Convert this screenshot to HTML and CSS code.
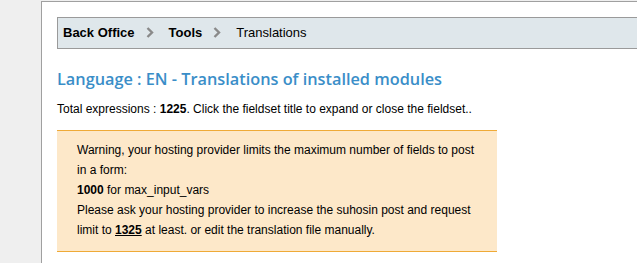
FILE: index.html
```html
<!DOCTYPE html>
<html>
<head>
  <title>Translations</title>
  <link rel="stylesheet" href="styles.css">
</head>
<body>
  <div class="sidebar"></div>
  <div class="content">
    <div class="breadcrumb">
      <strong>Back Office</strong>
      <svg class="sep" width="8" height="11" viewBox="0 0 8 11"><path d="M1.5 1 L6 5.5 L1.5 10" fill="none" stroke="#8a8a8a" stroke-width="2.4"/></svg>
      <strong>Tools</strong>
      <svg class="sep" width="8" height="11" viewBox="0 0 8 11"><path d="M1.5 1 L6 5.5 L1.5 10" fill="none" stroke="#8a8a8a" stroke-width="2.4"/></svg>
      <span>Translations</span>
    </div>
    <h2 class="page-title">Language : EN - Translations of installed modules</h2>
    <p class="total">Total expressions : <b>1225</b>. Click the fieldset title to expand or close the fieldset..</p>
    <div class="warn">
      Warning, your hosting provider limits the maximum number of fields to post<br>
      in a form:<br>
      <b>1000</b> for max_input_vars<br>
      Please ask your hosting provider to increase the suhosin post and request<br>
      limit to <b><u>1325</u></b> at least. or edit the translation file manually.
    </div>
  </div>
</body>
</html>
```

FILE: styles.css
```css
body {
  margin: 0;
  padding: 0;
  font-family: Arial, "Liberation Sans", sans-serif;
  font-size: 12px;
  color: #000;
  display: flex;
  min-height: 263px;
  background: #efefef;
}
.sidebar {
  width: 41px;
  flex-shrink: 0;
}
.content {
  flex: 1;
  background: #fff;
  border-left: 1px solid #a0a0a0;
  border-top: 1px solid #a0a0a0;
  margin-top: 1px;
  padding: 15px 0 0 15px;
}
.breadcrumb {
  display: flex;
  align-items: center;
  height: 28px;
  padding: 0 0 2px 5px;
  background: #dfe7eb;
  border: 1px solid #9a9a9a;
  border-right: none;
  font-size: 13px;
}
.breadcrumb .sep {
  margin: 1px 15px 0 11px;
}
.page-title {
  margin: 19px 0 0 0;
  font-family: "Open Sans", sans-serif;
  font-size: 16.3px;
  font-weight: 600;
  color: #3a8ec8;
}
.total {
  margin: 12px 0 0 0;
}
.warn {
  width: 400px;
  margin-top: 14px;
  padding: 9px 20px 11px 20px;
  background: #fde8c9;
  border-top: 1px solid #efaa37;
  border-bottom: 1px solid #efaa37;
  line-height: 20px;
}
```
